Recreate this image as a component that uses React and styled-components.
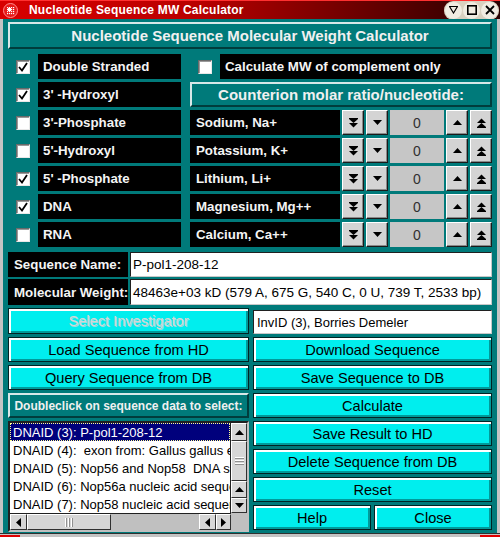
import React from 'react';
import styled, { createGlobalStyle, css } from 'styled-components';

const TEAL = '#007a7a';
const CYAN = '#00eeee';

const GlobalStyle = createGlobalStyle`
  html, body { margin: 0; padding: 0; background: #ffffff; }
  body { font-family: "Liberation Sans", Arial, sans-serif; }
  * { box-sizing: border-box; }
`;

const Window = styled.div`
  width: 500px;
  height: 537px;
  display: flex;
  flex-direction: column;
  background: #bcbcbc;
  overflow: hidden;
`;

const TitleBar = styled.div`
  height: 19px;
  flex: none;
  display: flex;
  align-items: center;
  padding: 0 3px;
  border-top: 1px solid #ff3030;
  background: linear-gradient(to right, #d80000 0%, #b80000 40%, #700000 70%, #280000 100%);
`;

const TitleText = styled.div`
  margin-left: 11px;
  color: #ffffff;
  font-weight: bold;
  font-size: 12px;
  letter-spacing: 0.2px;
  flex: 1;
`;

const WinButtons = styled.div`
  display: flex;
  align-items: center;
  gap: 1px;
  padding: 1px;
  margin-right: -2px;
  border-radius: 9px;
  background: #d8d0c0;
`;

const WinButton = styled.div`
  width: 17px;
  height: 17px;
  border-radius: 50%;
  background: #f0ece2;
  display: flex;
  align-items: center;
  justify-content: center;
`;

const Frame = styled.div`
  flex: 1;
  display: flex;
  flex-direction: column;
  border-left: 3px solid #c4c4c4;
  border-right: 3px solid #c4c4c4;
  background: ${TEAL};
  padding: 3px 5px 0;
`;

const Footer = styled.div`
  height: 5px;
  flex: none;
  display: flex;
  justify-content: space-between;
  align-items: flex-end;
  border-top: 1px solid #303030;
  background: #c4c4c4;
`;

const CornerMark = styled.div`
  width: 20px;
  height: 3px;
  background: #e00000;
`;

const bevelOut = css`
  border: 2px solid;
  border-color: #d8e8e8 #003c3c #003c3c #d8e8e8;
`;

const Banner = styled.div`
  ${bevelOut};
  height: ${p => p.$h}px;
  flex: none;
  display: flex;
  align-items: center;
  justify-content: center;
  color: #f0f0f0;
  font-weight: bold;
  font-size: ${p => p.$size}px;
  background: ${TEAL};
  white-space: nowrap;
`;

const OptionsGrid = styled.div`
  margin-top: 5px;
  display: grid;
  grid-template-columns: 173px 302px;
  column-gap: 9px;
  row-gap: 3px;
  grid-auto-rows: 25px;
`;

const OptionRow = styled.div`
  display: flex;
  align-items: stretch;
`;

const CheckCell = styled.div`
  width: 30px;
  flex: none;
  display: flex;
  align-items: center;
  justify-content: center;
`;

const Box = styled.span`
  width: 14px;
  height: 14px;
  display: flex;
  align-items: center;
  justify-content: center;
  background: #ffffff;
  border: 1px solid;
  border-color: #6a6a6a #e8e8e8 #e8e8e8 #6a6a6a;
  box-shadow: inset 1px 1px 0 #9a9a9a;
`;

const BlackLabel = styled.div`
  flex: ${p => (p.$w ? 'none' : 1)};
  width: ${p => (p.$w ? `${p.$w}px` : 'auto')};
  background: #000000;
  color: #f4f4f4;
  font-weight: bold;
  font-size: 13.3px;
  display: flex;
  align-items: center;
  padding-left: ${p => p.$pad || 5}px;
  white-space: nowrap;
`;

const Spinner = styled.div`
  flex: 1;
  display: flex;
  gap: 2px;
  margin-left: 2px;
`;

const SpinButton = styled.div`
  width: 22px;
  flex: none;
  display: flex;
  align-items: center;
  justify-content: center;
  background: #d4d4d4;
  border: 1px solid;
  border-color: #ffffff #1a1a1a #1a1a1a #ffffff;
  box-shadow: inset -1px -1px 0 #8a8a8a;
`;

const SpinValue = styled.div`
  flex: 1;
  display: flex;
  align-items: center;
  justify-content: center;
  background: #c6c6c6;
  color: #303030;
  font-size: 14px;
`;

const FieldRows = styled.div`
  margin-top: 5px;
  display: flex;
  flex-direction: column;
  gap: 2px;
`;

const FieldRow = styled.div`
  height: ${p => p.$h}px;
  display: flex;
  gap: 2px;
`;

const TextField = styled.div`
  flex: 1;
  background: #ffffff;
  border: 1px solid;
  border-color: #202020 #c8c8c8 #c8c8c8 #202020;
  color: #000000;
  font-size: 13.5px;
  display: flex;
  align-items: center;
  padding-left: 2px;
  white-space: nowrap;
  overflow: hidden;
`;

const InfoField = styled(TextField)`
  flex: none;
  height: 24px;
  margin-top: 2px;
  padding-left: 3px;
  font-size: 13px;
`;

const ActionGrid = styled.div`
  margin-top: 3px;
  flex: 1;
  display: grid;
  grid-template-columns: 241px 239px;
  column-gap: 4px;
  padding-bottom: 1px;
  min-height: 0;
`;

const Column = styled.div`
  display: flex;
  flex-direction: column;
  gap: 3px;
  min-height: 0;
`;

const CyanButton = styled.div`
  height: ${p => p.$h || 25}px;
  flex: ${p => (p.$grow ? 1 : 'none')};
  display: flex;
  align-items: center;
  justify-content: center;
  background: ${CYAN};
  border: 1px solid #002424;
  box-shadow: inset 2px 2px 0 #ffffff, inset -2px -2px 0 #009a9a;
  color: ${p => (p.$disabled ? '#d6d6d6' : '#000000')};
  text-shadow: ${p => (p.$disabled ? '1px 1px 0 #9adede' : 'none')};
  font-size: 14.6px;
  white-space: nowrap;
`;

const ButtonPair = styled.div`
  display: flex;
  gap: 3px;
`;

const ListBox = styled.div`
  flex: 1;
  min-height: 0;
  display: grid;
  grid-template-columns: 1fr 16px;
  grid-template-rows: 1fr 17px;
  background: #c0c0c0;
  border: 2px solid;
  border-color: #202020 #c0c0c0 #c0c0c0 #202020;
`;

const ListItems = styled.div`
  background: #ffffff;
  overflow: hidden;
  border-right: 1px solid #202020;
`;

const ListItem = styled.div`
  height: 18px;
  padding-left: 3px;
  display: flex;
  align-items: center;
  font-size: 13px;
  white-space: pre;
  color: ${p => (p.$selected ? '#ffffff' : '#000000')};
  background: ${p => (p.$selected ? '#00007c' : 'transparent')};
  outline: ${p => (p.$selected ? '1px dotted #ffff90' : 'none')};
  outline-offset: -1px;
`;

const VScroll = styled.div`
  display: flex;
  flex-direction: column;
  background: #c0c0c0;
`;

const HScroll = styled.div`
  display: flex;
  background: #c0c0c0;
  border-top: 1px solid #202020;
`;

const ScrollButton = styled.div`
  width: ${p => p.$w || 16}px;
  height: ${p => p.$h || 16}px;
  flex: none;
  display: flex;
  align-items: center;
  justify-content: center;
  background: #d6d6d6;
  border: 1px solid;
  border-color: #ffffff #303030 #303030 #ffffff;
`;

const Thumb = styled.div`
  flex: ${p => (p.$size ? 'none' : 1)};
  width: ${p => (p.$vertical ? '16px' : `${p.$size}px`)};
  height: ${p => (p.$vertical ? 'auto' : '100%')};
  display: flex;
  align-items: center;
  justify-content: center;
  background: #d6d6d6;
  border: 1px solid;
  border-color: #ffffff #303030 #303030 #ffffff;
`;

const Grip = styled.div`
  display: flex;
  flex-direction: ${p => (p.$vertical ? 'column' : 'row')};
  gap: 1px;
  & > span {
    display: block;
    background: #ffffff;
    border: 1px solid #909090;
    border-width: ${p => (p.$vertical ? '0 0 1px 0' : '0 1px 0 0')};
    width: ${p => (p.$vertical ? '9px' : '2px')};
    height: ${p => (p.$vertical ? '2px' : '9px')};
  }
`;

const Trough = styled.div`
  flex: 1;
  background: #c0c0c0;
`;

const Corner = styled.div`
  background: #c0c0c0;
`;

const Arrow = ({ dir = 'up', w = 8, h = 5 }) => {
  const pts = {
    up: `0,${h} ${w / 2},0 ${w},${h}`,
    down: `0,0 ${w / 2},${h} ${w},0`,
    left: `${w},0 0,${h / 2} ${w},${h}`,
    right: `0,0 ${w},${h / 2} 0,${h}`,
  }[dir];
  return (
    <svg width={w} height={h} viewBox={`0 0 ${w} ${h}`}>
      <polygon points={pts} fill="#000" />
    </svg>
  );
};

const DoubleArrow = ({ dir }) => (
  <svg width="9" height="10" viewBox="0 0 9 10">
    {dir === 'down' ? (
      <>
        <rect x="0" y="0" width="9" height="1" fill="#000" />
        <polygon points="0,1 4.5,5 9,1" fill="#000" />
        <polygon points="0,5 4.5,9.5 9,5" fill="#000" />
      </>
    ) : (
      <>
        <polygon points="0,5 4.5,0.5 9,5" fill="#000" />
        <polygon points="0,9 4.5,5 9,9" fill="#000" />
        <rect x="0" y="9" width="9" height="1" fill="#000" />
      </>
    )}
  </svg>
);

const CheckBox = ({ checked }) => (
  <Box>
    {checked && (
      <svg width="10" height="10" viewBox="0 0 10 10">
        <polyline points="1,5 4,8.5 9,1" fill="none" stroke="#000" strokeWidth="1.8" />
      </svg>
    )}
  </Box>
);

const AppIcon = () => (
  <svg width="15" height="15" viewBox="0 0 15 15">
    <circle cx="7.5" cy="7.5" r="7" fill="#e81818" stroke="#ff9090" strokeWidth="1" />
    {[4, 6, 8, 10].map(y =>
      [4, 6, 8, 10].map(x => (
        <rect key={`${x}-${y}`} x={x} y={y} width="1.2" height="1.2" fill="#ffffff" />
      ))
    )}
    <rect x="5" y="5" width="3" height="3" fill="#ffffff" />
  </svg>
);

const options = [
  { label: 'Double Stranded', checked: true },
  { label: "3' -Hydroxyl", checked: true },
  { label: "3'-Phosphate", checked: false },
  { label: "5'-Hydroxyl", checked: false },
  { label: "5' -Phosphate", checked: true },
  { label: 'DNA', checked: true },
  { label: 'RNA', checked: false },
];

const ions = ['Sodium, Na+', 'Potassium, K+', 'Lithium, Li+', 'Magnesium, Mg++', 'Calcium, Ca++'];

const sequences = [
  'DNAID (3): P-pol1-208-12',
  'DNAID (4):  exon from: Gallus gallus exon',
  'DNAID (5): Nop56 and Nop58  DNA sequence',
  'DNAID (6): Nop56a nucleic acid sequence',
  'DNAID (7): Nop58 nucleic acid sequence',
];

const IonRow = ({ name }) => (
  <OptionRow>
    <BlackLabel $w={150} $pad={6}>{name}</BlackLabel>
    <Spinner>
      <SpinButton><DoubleArrow dir="down" /></SpinButton>
      <SpinButton><Arrow dir="down" w={9} h={5} /></SpinButton>
      <SpinValue>0</SpinValue>
      <SpinButton><Arrow dir="up" w={9} h={5} /></SpinButton>
      <SpinButton><DoubleArrow dir="up" /></SpinButton>
    </Spinner>
  </OptionRow>
);

const rightCells = [
  <OptionRow key="c">
    <CheckCell><CheckBox checked={false} /></CheckCell>
    <BlackLabel>Calculate MW of complement only</BlackLabel>
  </OptionRow>,
  <Banner key="b" $h={25} $size={15}>Counterion molar ratio/nucleotide:</Banner>,
  ...ions.map(n => <IonRow key={n} name={n} />),
];

export default function App() {
  return (
    <>
      <GlobalStyle />
      <Window>
        <TitleBar>
          <AppIcon />
          <TitleText>Nucleotide Sequence MW Calculator</TitleText>
          <WinButtons>
            <WinButton>
              <svg width="9" height="8" viewBox="0 0 9 8">
                <polygon points="0.5,0.5 8.5,0.5 4.5,7" fill="none" stroke="#000" strokeWidth="1.2" />
              </svg>
            </WinButton>
            <WinButton>
              <svg width="10" height="10" viewBox="0 0 10 10">
                <rect x="0.8" y="0.8" width="8.4" height="8.4" fill="none" stroke="#000" strokeWidth="1.6" />
              </svg>
            </WinButton>
            <WinButton>
              <svg width="10" height="10" viewBox="0 0 10 10">
                <path d="M1 1 L9 9 M9 1 L1 9" stroke="#000" strokeWidth="1.8" />
              </svg>
            </WinButton>
          </WinButtons>
        </TitleBar>

        <Frame>
          <Banner $h={27} $size={15}>Nucleotide Sequence Molecular Weight Calculator</Banner>

          <OptionsGrid>
            {options.map((o, i) => (
              <React.Fragment key={o.label}>
                <OptionRow>
                  <CheckCell><CheckBox checked={o.checked} /></CheckCell>
                  <BlackLabel>{o.label}</BlackLabel>
                </OptionRow>
                {rightCells[i]}
              </React.Fragment>
            ))}
          </OptionsGrid>

          <FieldRows>
            <FieldRow $h={25}>
              <BlackLabel $w={120} $pad={6}>Sequence Name:</BlackLabel>
              <TextField>P-pol1-208-12</TextField>
            </FieldRow>
            <FieldRow $h={26}>
              <BlackLabel $w={120} $pad={6}>Molecular Weight:</BlackLabel>
              <TextField>48463e+03 kD (579 A, 675 G, 540 C, 0 U, 739 T, 2533 bp)</TextField>
            </FieldRow>
          </FieldRows>

          <ActionGrid>
            <Column>
              <CyanButton $h={26} $disabled>Select Investigator</CyanButton>
              <CyanButton>Load Sequence from HD</CyanButton>
              <CyanButton>Query Sequence from DB</CyanButton>
              <Banner $h={25} $size={12}>Doubleclick on sequence data to select:</Banner>
              <ListBox>
                <ListItems>
                  {sequences.map((s, i) => (
                    <ListItem key={s} $selected={i === 0}>{s}</ListItem>
                  ))}
                </ListItems>
                <VScroll>
                  <ScrollButton $h={18}><Arrow dir="up" w={9} h={5} /></ScrollButton>
                  <Thumb $vertical>
                    <Grip $vertical><span /><span /><span /></Grip>
                  </Thumb>
                  <ScrollButton $h={17}><Arrow dir="up" w={9} h={5} /></ScrollButton>
                  <ScrollButton $h={15}><Arrow dir="down" w={9} h={5} /></ScrollButton>
                </VScroll>
                <HScroll>
                  <ScrollButton $w={17} $h={16}><Arrow dir="left" w={5} h={9} /></ScrollButton>
                  <Thumb $size={84}>
                    <Grip><span /><span /><span /></Grip>
                  </Thumb>
                  <Trough />
                  <ScrollButton $w={17} $h={16}><Arrow dir="left" w={5} h={9} /></ScrollButton>
                  <ScrollButton $w={15} $h={16}><Arrow dir="right" w={5} h={9} /></ScrollButton>
                </HScroll>
                <Corner />
              </ListBox>
            </Column>

            <Column>
              <InfoField>InvID (3), Borries Demeler</InfoField>
              <CyanButton>Download Sequence</CyanButton>
              <CyanButton>Save Sequence to DB</CyanButton>
              <CyanButton>Calculate</CyanButton>
              <CyanButton>Save Result to HD</CyanButton>
              <CyanButton>Delete Sequence from DB</CyanButton>
              <CyanButton>Reset</CyanButton>
              <ButtonPair>
                <CyanButton $grow>Help</CyanButton>
                <CyanButton $grow>Close</CyanButton>
              </ButtonPair>
            </Column>
          </ActionGrid>
        </Frame>

        <Footer>
          <CornerMark />
          <CornerMark />
        </Footer>
      </Window>
    </>
  );
}
